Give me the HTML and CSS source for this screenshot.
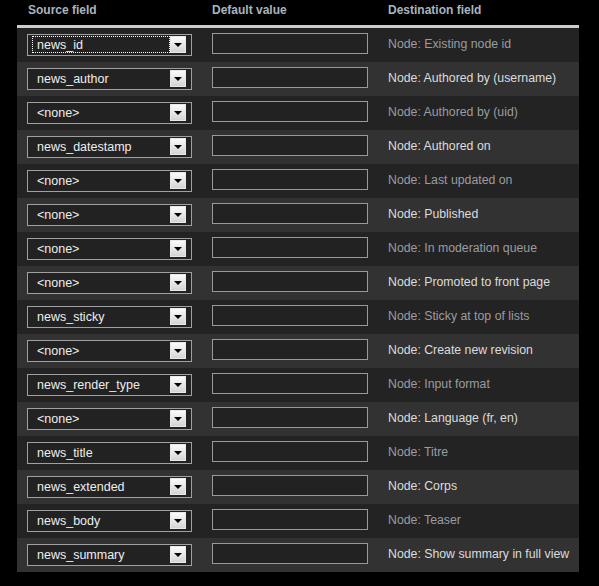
FILE: index.html
```html
<!DOCTYPE html>
<html>
<head>
<meta charset="utf-8">
<link rel="stylesheet" href="styles.css">
</head>
<body>
<div class="table">
  <div class="head">
    <div class="hcell">Source field</div>
    <div class="hcell">Default value</div>
    <div class="hcell">Destination field</div>
  </div>
  <div class="row odd"><div class="c1"><div class="sel"><span class="val focus">news_id</span><span class="btn"></span></div></div><div class="c2"><div class="inp"></div></div><div class="c3">Node: Existing node id</div></div>
  <div class="row even"><div class="c1"><div class="sel"><span class="val">news_author</span><span class="btn"></span></div></div><div class="c2"><div class="inp"></div></div><div class="c3">Node: Authored by (username)</div></div>
  <div class="row odd"><div class="c1"><div class="sel"><span class="val">&lt;none&gt;</span><span class="btn"></span></div></div><div class="c2"><div class="inp"></div></div><div class="c3">Node: Authored by (uid)</div></div>
  <div class="row even"><div class="c1"><div class="sel"><span class="val">news_datestamp</span><span class="btn"></span></div></div><div class="c2"><div class="inp"></div></div><div class="c3">Node: Authored on</div></div>
  <div class="row odd"><div class="c1"><div class="sel"><span class="val">&lt;none&gt;</span><span class="btn"></span></div></div><div class="c2"><div class="inp"></div></div><div class="c3">Node: Last updated on</div></div>
  <div class="row even"><div class="c1"><div class="sel"><span class="val">&lt;none&gt;</span><span class="btn"></span></div></div><div class="c2"><div class="inp"></div></div><div class="c3">Node: Published</div></div>
  <div class="row odd"><div class="c1"><div class="sel"><span class="val">&lt;none&gt;</span><span class="btn"></span></div></div><div class="c2"><div class="inp"></div></div><div class="c3">Node: In moderation queue</div></div>
  <div class="row even"><div class="c1"><div class="sel"><span class="val">&lt;none&gt;</span><span class="btn"></span></div></div><div class="c2"><div class="inp"></div></div><div class="c3">Node: Promoted to front page</div></div>
  <div class="row odd"><div class="c1"><div class="sel"><span class="val">news_sticky</span><span class="btn"></span></div></div><div class="c2"><div class="inp"></div></div><div class="c3">Node: Sticky at top of lists</div></div>
  <div class="row even"><div class="c1"><div class="sel"><span class="val">&lt;none&gt;</span><span class="btn"></span></div></div><div class="c2"><div class="inp"></div></div><div class="c3">Node: Create new revision</div></div>
  <div class="row odd"><div class="c1"><div class="sel"><span class="val">news_render_type</span><span class="btn"></span></div></div><div class="c2"><div class="inp"></div></div><div class="c3">Node: Input format</div></div>
  <div class="row even"><div class="c1"><div class="sel"><span class="val">&lt;none&gt;</span><span class="btn"></span></div></div><div class="c2"><div class="inp"></div></div><div class="c3">Node: Language (fr, en)</div></div>
  <div class="row odd"><div class="c1"><div class="sel"><span class="val">news_title</span><span class="btn"></span></div></div><div class="c2"><div class="inp"></div></div><div class="c3">Node: Titre</div></div>
  <div class="row even"><div class="c1"><div class="sel"><span class="val">news_extended</span><span class="btn"></span></div></div><div class="c2"><div class="inp"></div></div><div class="c3">Node: Corps</div></div>
  <div class="row odd"><div class="c1"><div class="sel"><span class="val">news_body</span><span class="btn"></span></div></div><div class="c2"><div class="inp"></div></div><div class="c3">Node: Teaser</div></div>
  <div class="row even"><div class="c1"><div class="sel"><span class="val">news_summary</span><span class="btn"></span></div></div><div class="c2"><div class="inp"></div></div><div class="c3">Node: Show summary in full view</div></div>
</div>
</body>
</html>
```

FILE: styles.css
```css
html, body {
  margin: 0;
  padding: 0;
  background: #000;
}
body {
  font-family: "Liberation Sans", Arial, sans-serif;
}
.table {
  margin-left: 17px;
  width: 562px;
}
.head {
  display: grid;
  grid-template-columns: 185px 176px 1fr;
  height: 25px;
  border-bottom: 3px solid #cccccc;
  box-sizing: content-box;
}
.hcell {
  font-size: 12px;
  font-weight: bold;
  color: #aab4be;
  padding-left: 11px;
  padding-top: 3px;
  line-height: 14px;
}
.hcell + .hcell {
  padding-left: 10px;
}
.row {
  display: grid;
  grid-template-columns: 185px 176px 1fr;
  height: 34px;
  box-sizing: border-box;
}
.odd { background: #232323; }
.even { background: #323232; }
.c1 {
  padding: 6px 0 0 10px;
}
.c2 {
  padding: 5px 0 0 10px;
}
.c3 {
  padding-left: 10px;
  display: flex;
  align-items: center;
  font-size: 12.3px;
  padding-bottom: 3px;
}
.odd .c3 { color: #9a9ca0; }
.even .c3 { color: #dcdcdc; }
.sel {
  width: 165px;
  height: 22px;
  box-sizing: border-box;
  border: 1px solid #a0a0a0;
  background: #222;
  display: flex;
  align-items: flex-start;
  padding: 1px 5px 0 4px;
}
.val {
  flex: 1;
  height: 17px;
  box-sizing: border-box;
  border: 1px dotted transparent;
  color: #eeeeee;
  font-size: 12.5px;
  line-height: 15px;
  padding: 1px 0 0 4px;
  white-space: nowrap;
}
.val.focus {
  border-color: #ffffff;
}
.btn {
  width: 16px;
  height: 17px;
  box-sizing: border-box;
  background: linear-gradient(#fbfbfb, #d4d4d4);
  border: 1px solid #e8e8e8;
  display: flex;
  align-items: center;
  justify-content: center;
}
.btn::after {
  content: "";
  width: 0;
  height: 0;
  border-left: 4px solid transparent;
  border-right: 4px solid transparent;
  border-top: 4px solid #000;
  margin-top: 1px;
}
.inp {
  width: 156px;
  height: 21px;
  box-sizing: border-box;
  border: 1px solid #999;
  background: #222;
}
```
